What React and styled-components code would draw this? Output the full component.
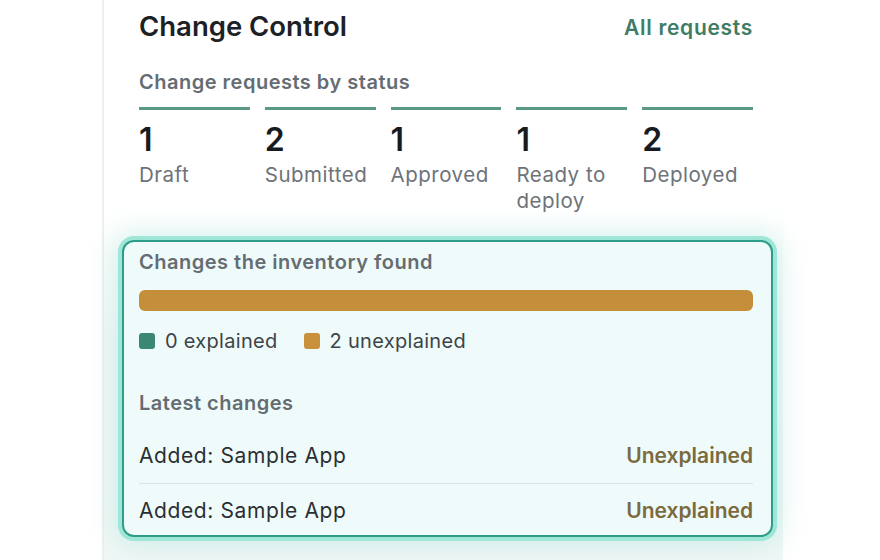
import styled, { createGlobalStyle } from "styled-components";

const GlobalStyle = createGlobalStyle`
  html, body {
    margin: 0;
    padding: 0;
    background: #ffffff;
  }
  body {
    font-family: Inter, "Noto Sans", "Liberation Sans", sans-serif;
    -webkit-font-smoothing: antialiased;
  }
  #root {
    height: 560px;
    overflow: hidden;
  }
`;

const statuses = [
  { count: 1, label: "Draft" },
  { count: 2, label: "Submitted" },
  { count: 1, label: "Approved" },
  { count: 1, label: "Ready to deploy" },
  { count: 2, label: "Deployed" },
];

const changes = [
  { name: "Added: Sample App", state: "Unexplained" },
  { name: "Added: Sample App", state: "Unexplained" },
];

const ChangeControl = () => {
  const explained = 0;
  const unexplained = 2;
  const total = explained + unexplained;

  return (
    <Panel>
      <Header>
        <Title>Change Control</Title>
        <HeaderLink href="#">All requests</HeaderLink>
      </Header>

      <SectionLabel>Change requests by status</SectionLabel>
      <StatusGrid>
        {statuses.map((s) => (
          <Status key={s.label}>
            <Count>{s.count}</Count>
            <StatusName>{s.label}</StatusName>
          </Status>
        ))}
      </StatusGrid>

      <InventoryCard>
        <SectionLabel $tight>Changes the inventory found</SectionLabel>
        <Track>
          <Segment $color="#3b8872" style={{ width: `${(explained / total) * 100}%` }} />
          <Segment $color="#c58e3b" style={{ width: `${(unexplained / total) * 100}%` }} />
        </Track>
        <Legend>
          <LegendItem>
            <Swatch $color="#3b8872" />0 explained
          </LegendItem>
          <LegendItem>
            <Swatch $color="#c9913c" />2 unexplained
          </LegendItem>
        </Legend>

        <SectionLabel $latest>Latest changes</SectionLabel>
        <ChangeList>
          {changes.map((c, i) => (
            <ChangeRow key={i}>
              <span>{c.name}</span>
              <ChangeState>{c.state}</ChangeState>
            </ChangeRow>
          ))}
        </ChangeList>
      </InventoryCard>
    </Panel>
  );
};

const App = () => (
  <>
    <GlobalStyle />
    <ChangeControl />
  </>
);

const Panel = styled.section`
  box-sizing: border-box;
  margin-left: 102px;
  width: 681px;
  height: 560px;
  padding: 9px 30px 0 35px;
  border-left: 2px solid #efefef;
  background: linear-gradient(
    180deg,
    #ffffff 0%,
    #ffffff 38%,
    #f1f8f7 60%,
    #f0f7f6 100%
  );
`;

const Header = styled.header`
  display: flex;
  justify-content: space-between;
  align-items: center;
  height: 34px;
`;

const Title = styled.h2`
  margin: 0;
  font-size: 27.5px;
  line-height: 34px;
  font-weight: 600;
  color: #1c2125;
`;

const HeaderLink = styled.a`
  margin-top: 4px;
  font-size: 21px;
  line-height: 24px;
  font-weight: 600;
  letter-spacing: 0.7px;
  color: #3f7c66;
  text-decoration: none;
`;

const SectionLabel = styled.div`
  margin-top: ${({ $tight, $latest }) => ($tight ? "0" : $latest ? "38px" : "27px")};
  font-size: 20px;
  line-height: 24px;
  font-weight: 600;
  letter-spacing: 0.5px;
  color: #656c72;
`;

const StatusGrid = styled.div`
  display: grid;
  grid-template-columns: repeat(5, 1fr);
  gap: 15px;
  margin-top: 13px;
`;

const Status = styled.div`
  border-top: 3px solid #5b9986;
  padding-top: 12px;
`;

const Count = styled.div`
  font-size: 32px;
  line-height: 36px;
  font-weight: 600;
  color: #171b1f;
`;

const StatusName = styled.div`
  margin-top: 4px;
  font-size: 20.5px;
  line-height: 26px;
  letter-spacing: 0.5px;
  color: #6d7379;
`;

const InventoryCard = styled.div`
  margin: 26px -20px 0 -17px;
  padding: 8px 18px 0 15px;
  border: 2px solid #2e9d88;
  border-radius: 12px;
  background: #effbfa;
  box-shadow: 0 0 0 4px #9de6d8, 0 0 28px 6px rgba(130, 215, 200, 0.35);
`;

const Track = styled.div`
  display: flex;
  height: 21px;
  margin-top: 16px;
  border-radius: 6px;
  overflow: hidden;
`;

const Segment = styled.div`
  height: 100%;
  background: ${({ $color }) => $color};
`;

const Legend = styled.div`
  display: flex;
  gap: 26px;
  margin-top: 18px;
`;

const LegendItem = styled.div`
  display: flex;
  align-items: center;
  gap: 10px;
  font-size: 20px;
  line-height: 24px;
  letter-spacing: 0.3px;
  color: #3d4348;
`;

const Swatch = styled.span`
  width: 16px;
  height: 16px;
  border-radius: 3px;
  background: ${({ $color }) => $color};
`;

const ChangeList = styled.div`
  margin-top: 14px;
`;

const ChangeRow = styled.div`
  display: flex;
  justify-content: space-between;
  align-items: center;
  padding: 14px 0;
  font-size: 21px;
  line-height: 26px;
  letter-spacing: 0.6px;
  color: #2a2f34;

  & + & {
    border-top: 1px solid #dbe3e2;
  }
  &:last-child {
    padding-bottom: 11px;
  }
`;

const ChangeState = styled.span`
  font-weight: 600;
  letter-spacing: 0;
  color: #7b6a3e;
`;

export default App;
